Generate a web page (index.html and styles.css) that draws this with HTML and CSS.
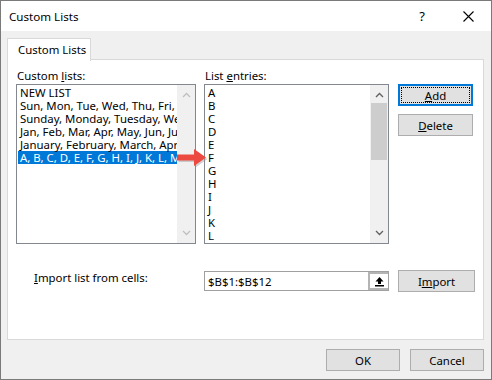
FILE: index.html
```html
<!DOCTYPE html>
<html lang="en">
<head>
  <meta charset="UTF-8" />
  <title>Custom Lists</title>
  <link rel="stylesheet" href="styles.css">
</head>
<body>

  <div class="window">
    <div class="titlebar">
      <span class="title">Custom Lists</span>
      <span class="help">?</span>
      <span class="close">
        <svg width="11" height="11" viewBox="0 0 11 11"><path d="M0.5 0.5 L10.5 10.5 M10.5 0.5 L0.5 10.5" stroke="#000" stroke-width="1.1" fill="none"/></svg>
      </span>
    </div>

    <div class="body">
      <div class="tabs">
        <div class="tab">Custom Lists</div>
      </div>

      <div class="panel">
        <div class="lists-row">
          <div class="col col-left">
            <div class="label">Custom <u>l</u>ists:</div>
            <div class="listbox">
              <div class="items">
                <div class="item">NEW LIST</div>
                <div class="item">Sun, Mon, Tue, Wed, Thu, Fri, Sat</div>
                <div class="item">Sunday, Monday, Tuesday, Wednesday, Thursday</div>
                <div class="item">Jan, Feb, Mar, Apr, May, Jun, Jul, Aug</div>
                <div class="item">January, February, March, April, May</div>
                <div class="item selected">A, B, C, D, E, F, G, H, I, J, K, L, M, N</div>
              </div>
              <div class="scrollbar disabled">
                <svg class="arrow" width="9" height="6" viewBox="0 0 9 6"><path d="M1 5 L4.5 1.5 L8 5" stroke="currentColor" stroke-width="1.3" fill="none"/></svg>
                <div class="track"></div>
                <svg class="arrow" width="9" height="6" viewBox="0 0 9 6"><path d="M1 1 L4.5 4.5 L8 1" stroke="currentColor" stroke-width="1.3" fill="none"/></svg>
              </div>
            </div>
          </div>

          <div class="col col-mid">
            <div class="label">List <u>e</u>ntries:</div>
            <div class="listbox">
              <div class="items entries">
                <div class="item">A</div>
                <div class="item">B</div>
                <div class="item">C</div>
                <div class="item">D</div>
                <div class="item">E</div>
                <div class="item">F</div>
                <div class="item">G</div>
                <div class="item">H</div>
                <div class="item">I</div>
                <div class="item">J</div>
                <div class="item">K</div>
                <div class="item">L</div>
              </div>
              <div class="scrollbar">
                <svg class="arrow" width="9" height="6" viewBox="0 0 9 6"><path d="M1 5 L4.5 1.5 L8 5" stroke="currentColor" stroke-width="1.3" fill="none"/></svg>
                <div class="track"><div class="thumb"></div></div>
                <svg class="arrow" width="9" height="6" viewBox="0 0 9 6"><path d="M1 1 L4.5 4.5 L8 1" stroke="currentColor" stroke-width="1.3" fill="none"/></svg>
              </div>
            </div>
          </div>

          <div class="col col-buttons">
            <button class="btn default"><span class="focus"><u>A</u>dd</span></button>
            <button class="btn"><u>D</u>elete</button>
          </div>
        </div>

        <div class="import-row">
          <div class="import-label"><u>I</u>mport list from cells:</div>
          <div class="refedit">
            <span class="ref-text">$B$1:$B$12</span>
            <span class="ref-btn">
              <svg width="11" height="11" viewBox="0 0 11 11"><path d="M5.5 1 L1.5 5.5 H4 V8 H7 V5.5 H9.5 Z" fill="#000"/><rect x="1" y="9" width="9" height="1.5" fill="#000"/></svg>
            </span>
          </div>
          <button class="btn btn-import">I<u>m</u>port</button>
        </div>

        <!-- red callout arrow pointing from the selected list to its entries -->
        <svg class="callout" width="38" height="22" viewBox="0 0 38 22">
          <path d="M2 7.5 H19 V2 L31 10.5 L19 19 V13.5 H2 Z" fill="#9a9a9a" opacity="0.45" transform="translate(1.5 1.5)"/>
          <path d="M2 7.5 H19 V2 L31 10.5 L19 19 V13.5 H2 Z" fill="#ec4a40"/>
        </svg>
      </div>

      <div class="footer">
        <button class="btn">OK</button>
        <button class="btn">Cancel</button>
      </div>
    </div>
  </div>

</body>
</html>
```

FILE: styles.css
```css
body {
  margin: 0;
  font-family: "Segoe UI", "Noto Sans", sans-serif;
  font-size: 11.4px;
  color: #000;
  background: #fff;
}
.window {
  width: 492px;
  height: 380px;
  box-sizing: border-box;
  border: 1px solid #7a7a7a;
  display: flex;
  flex-direction: column;
  background: #f0f0f0;
}
.titlebar {
  height: 30px;
  background: #fff;
  display: flex;
  align-items: center;
  padding-left: 8px;
}
.title {
  flex: 1;
  font-size: 11.6px;
}
.help {
  font-size: 13px;
  margin-right: 38px;
}
.close {
  display: flex;
  margin-right: 17px;
}
.body {
  flex: 1;
  padding: 7px 7px 0 6px;
  display: flex;
  flex-direction: column;
}
.tabs {
  display: flex;
  height: 21px;
}
.tab {
  background: #fff;
  border: 1px solid #d9d9d9;
  border-bottom: none;
  padding: 0 9px 0 10px;
  line-height: 21px;
  width: 63px;
  white-space: nowrap;
  position: relative;
  z-index: 1;
  height: 22px;
}
.panel {
  position: relative;
  background: #fff;
  border: 1px solid #d9d9d9;
  height: 281px;
  box-sizing: border-box;
}
.lists-row {
  display: flex;
  padding: 8px 0 0 8px;
}
.col-left {
  width: 180px;
  margin-right: 8px;
}
.col-mid {
  width: 185px;
  margin-right: 9px;
}
.col-buttons {
  padding-top: 16px;
  display: flex;
  flex-direction: column;
  gap: 8px;
}
.label {
  height: 16px;
  line-height: 16px;
  padding-left: 1px;
}
.listbox {
  height: 160px;
  box-sizing: border-box;
  border: 1px solid #828790;
  display: flex;
}
.items {
  flex: 1;
  overflow: hidden;
  padding: 1px 0 0 1px;
}
.item {
  height: 13px;
  line-height: 13px;
  padding-left: 2px;
  white-space: nowrap;
}
.item.selected {
  background: #0078d7;
  color: #fff;
}
.scrollbar {
  width: 18px;
  background: #f0f0f0;
  display: flex;
  flex-direction: column;
  align-items: center;
  color: #606060;
}
.scrollbar.disabled {
  color: #bfbfbf;
}
.arrow {
  margin: 7px 0 5px;
}
.scrollbar .arrow:last-child {
  margin: 5px 0 7px;
}
.track {
  flex: 1;
  width: 100%;
  display: flex;
  justify-content: center;
}
.thumb {
  width: 16px;
  height: 57px;
  background: #cdcdcd;
}
.btn {
  font-family: inherit;
  font-size: 11.4px;
  color: #000;
  background: #e1e1e1;
  border: 1px solid #adadad;
  width: 75px;
  height: 22px;
  padding: 0;
  display: flex;
  align-items: center;
  justify-content: center;
}
.btn.default {
  border: 2px solid #0078d7;
  height: 22px;
  padding: 1px;
}
.focus {
  flex: 1;
  align-self: stretch;
  display: flex;
  align-items: center;
  justify-content: center;
  border: 1px dotted #000;
}
.import-row {
  display: flex;
  align-items: flex-start;
  margin-top: 26px;
  padding-left: 8px;
}
.import-label {
  width: 170px;
  padding-left: 18px;
  line-height: 16px;
}
.refedit {
  width: 185px;
  height: 20px;
  box-sizing: border-box;
  margin-top: 1px;
  border: 1px solid #a0a0a0;
  display: flex;
  align-items: center;
  margin-right: 9px;
}
.ref-text {
  flex: 1;
  padding-left: 3px;
}
.ref-btn {
  width: 20px;
  height: 18px;
  box-sizing: border-box;
  border: 2px solid #b4b4b4;
  border-right: none;
  background: #fff;
  display: flex;
  align-items: center;
  justify-content: center;
}
.btn-import {
  width: 77px;
}
.callout {
  position: absolute;
  left: 167px;
  top: 87px;
}
.footer {
  display: flex;
  justify-content: flex-end;
  gap: 10px;
  padding-top: 9px;
}
.footer .btn {
  width: 74px;
}
```
